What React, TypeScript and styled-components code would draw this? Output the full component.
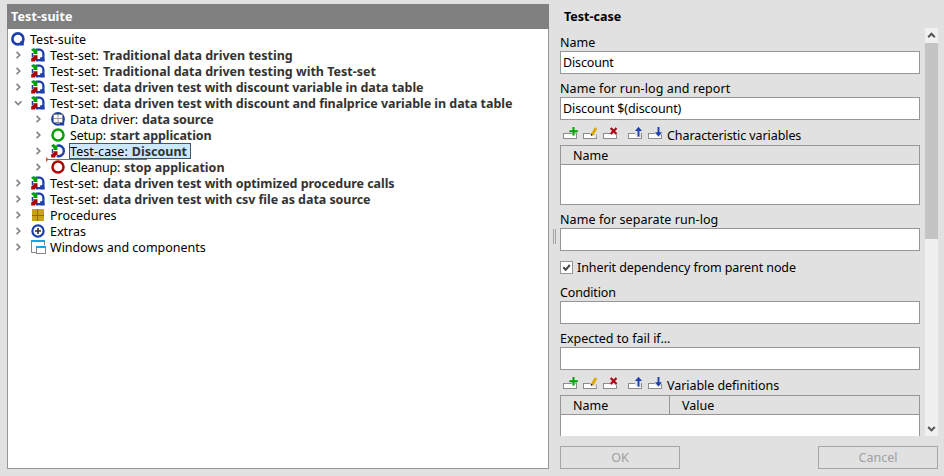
import React from 'react';
import styled, { createGlobalStyle } from 'styled-components';

const Global = createGlobalStyle`
  *, *::after { box-sizing: border-box; }
  body { margin: 0; background: #e1e1e1; }
`;

const Page = styled.div`
  display: flex;
  width: 944px;
  height: 476px;
  padding: 4px 6px 7px 7px;
  background: #e1e1e1;
  color: #000;
  font: 12.5px/16px 'Noto Sans', 'Open Sans', sans-serif;
  overflow: hidden;
  white-space: pre;
`;

const Text = styled.span<{ $track?: number }>`
  letter-spacing: ${p => p.$track ?? 0}px;
`;

/* ---------- tree ---------- */

const TreePanel = styled.section`
  display: flex;
  flex-direction: column;
  width: 542px;
  height: 465px;
`;

const TreeTitle = styled.header`
  height: 25px;
  padding: 5px 4px 0;
  background: #808080;
  color: #fff;
  font-weight: 700;
`;

const TreeBody = styled.div`
  flex: 1;
  padding: 2px 0 0 3px;
  background: #fff;
  border: solid #969696;
  border-width: 0 1px 1px;
`;

const Row = styled.div<{ $depth: number }>`
  position: relative;
  display: flex;
  align-items: center;
  height: 16px;
  padding-left: ${p => Math.max(0, p.$depth - 1) * 20}px;
`;

const Toggle = styled.svg`
  width: 15px;
  height: 16px;
  margin-right: 5px;
  fill: none;
  stroke: #858585;
  stroke-width: 1.7;
`;

const NodeIcon = styled.svg`
  width: 16px;
  height: 16px;
  flex: none;
`;

const NodeText = styled.span<{ $selected?: boolean }>`
  display: flex;
  align-items: flex-start;
  gap: 4px;
  height: 16px;
  margin-left: 2px;
  padding: 0 3px 0 0;
  border: 1px solid ${p => (p.$selected ? '#43556b' : 'transparent')};
  background: ${p => (p.$selected ? '#cce8ff' : 'transparent')};
`;

const NodeName = styled(Text)`
  font-weight: 700;
  color: #333;
`;

const DropMarker = styled.svg`
  position: absolute;
  left: 35px;
  top: 14px;
  width: 102px;
  height: 5px;
`;

const BLUE = '#1c3fae';
const GREEN = '#00a000';
const RED = '#ae0000';

type IconKind = 'suite' | 'set' | 'driver' | 'setup' | 'case' | 'cleanup' | 'procs' | 'extras' | 'windows';

function Icon({ kind }: { kind: IconKind }) {
  return (
    <NodeIcon viewBox="0 0 16 16">
      {kind === 'suite' && (
        <g fill="none" stroke={BLUE}>
          <circle cx="6.9" cy="7.9" r="5.5" strokeWidth="2.6" />
          <path d="M9 10.4h3.8v4.1h-3.6z" fill={BLUE} stroke="none" />
        </g>
      )}
      {kind === 'set' && (
        <g>
          <path d="M4.5 2.6H8.5A4.3 4.3 0 0 1 12.4 7v3.5a3.4 3.4 0 0 1-3.4 2.6H6" fill="none" stroke={BLUE} strokeWidth="2.3" />
          <path d="M9 10.2h3.4l1.3 1.6v2.6H9.6z" fill={BLUE} />
          <path d="M4.6 12h2.6v2.4H4.6z" fill={BLUE} />
          <path d="M1.4 6v4" stroke={BLUE} strokeWidth="1.4" />
          <path d="M0 2.4 2.8 1 5 2.7 6.4 2.3V7H2l.8-1.6z" fill={GREEN} />
          <path d="M2 8.3h4.5v4.3L5 11.9l-1 2.6H.2v-3.3l2.5-1.5z" fill={RED} />
        </g>
      )}
      {kind === 'case' && (
        <g>
          <path d="M5.8 2.9A5.3 5.3 0 1 1 5.8 12.9" fill="none" stroke={BLUE} strokeWidth="2.4" />
          <path d="M1.4 6v4" stroke={BLUE} strokeWidth="1.2" />
          <path d="M0 2.4 2.8 1 5 2.7 6.4 2.3V7H2l.8-1.6z" fill={GREEN} />
          <path d="M2 8.3h4.5v4.3L5 11.9l-1 2.6H.2v-3.3l2.5-1.5z" fill={RED} />
        </g>
      )}
      {kind === 'driver' && (
        <g>
          <circle cx="7" cy="7.9" r="5.8" fill="#fff" stroke={BLUE} strokeWidth="2.2" />
          <path d="M9 11h4.2v3.5H9.5z" fill={BLUE} />
          <rect x="2.5" y="3.5" width="9" height="8" rx="1" fill="#fff" stroke="#858585" />
          <path d="M3 7.5h8M7 3.5v8" stroke="#a0a0a0" fill="none" />
        </g>
      )}
      {kind === 'setup' && <circle cx="7" cy="8" r="5.5" fill="none" stroke={GREEN} strokeWidth="2.5" />}
      {kind === 'cleanup' && <circle cx="7" cy="8" r="5.5" fill="none" stroke={RED} strokeWidth="2.5" />}
      {kind === 'procs' && (
        <g>
          <rect x="1" y="2" width="12" height="12" fill="#c9a11c" />
          <path d="M6.5 2v12M1 8.5h12" stroke="#8d6c00" />
        </g>
      )}
      {kind === 'extras' && (
        <g fill="none">
          <circle cx="7" cy="8" r="5.6" stroke={BLUE} strokeWidth="2.2" />
          <path d="M4 8h6M7 5v6" stroke="#303030" strokeWidth="1.6" />
        </g>
      )}
      {kind === 'windows' && (
        <g>
          <path d="M.5 3v10.5h5M13.5 3v3" fill="none" stroke="#858585" />
          <path d="M0 2h14" stroke="#10a6e6" strokeWidth="2" />
          <rect x="5.5" y="7.5" width="9" height="7" fill="#fff" stroke="#858585" />
          <path d="M5 8h10" stroke="#10a6e6" strokeWidth="2" />
        </g>
      )}
    </NodeIcon>
  );
}

interface TreeNode {
  icon: IconKind;
  label: string;
  name?: string;
  depth?: number;
  open?: boolean;
  selected?: boolean;
  t1?: number;
  t2?: number;
}

const NODES: TreeNode[] = [
  { icon: 'suite', label: 'Test-suite', depth: 0 },
  { icon: 'set', label: 'Test-set:', name: 'Traditional data driven testing', t1: 0.05 },
  { icon: 'set', label: 'Test-set:', name: 'Traditional data driven testing with Test-set', t1: 0.05 },
  { icon: 'set', label: 'Test-set:', name: 'data driven test with discount variable in data table', t1: 0.05, t2: -0.055 },
  { icon: 'set', label: 'Test-set:', name: 'data driven test with discount and finalprice variable in data table', open: true, t1: 0.05, t2: -0.045 },
  { icon: 'driver', label: 'Data driver:', name: 'data source', depth: 2, t1: -0.07, t2: -0.13 },
  { icon: 'setup', label: 'Setup:', name: 'start application', depth: 2, t1: -0.2, t2: -0.1 },
  { icon: 'case', label: 'Test-case:', name: 'Discount', depth: 2, selected: true, t1: 0.08 },
  { icon: 'cleanup', label: 'Cleanup:', name: 'stop application', depth: 2, t1: -0.2 },
  { icon: 'set', label: 'Test-set:', name: 'data driven test with optimized procedure calls', t1: 0.05, t2: -0.055 },
  { icon: 'set', label: 'Test-set:', name: 'data driven test with csv file as data source', t1: 0.05, t2: -0.055 },
  { icon: 'procs', label: 'Procedures' },
  { icon: 'extras', label: 'Extras' },
  { icon: 'windows', label: 'Windows and components' },
];

function TreeRow({ node }: { node: TreeNode }) {
  const depth = node.depth ?? 1;
  return (
    <Row $depth={depth}>
      {depth > 0 && (
        <Toggle viewBox="0 0 15 16">
          <path d={node.open ? 'M4 6.3 7.2 9.5 10.4 6.3' : 'M5.6 4.8 8.8 8 5.6 11.2'} />
        </Toggle>
      )}
      <Icon kind={node.icon} />
      <NodeText $selected={node.selected}>
        <Text $track={node.t1}>{node.label}</Text>
        {node.name && <NodeName $track={node.t2}>{node.name}</NodeName>}
      </NodeText>
      {node.selected && (
        <DropMarker viewBox="0 0 102 5">
          <path d="M0 0v5l2.5-2.5z" fill="#d4501e" />
          <path d="M0 2.5h101" stroke="#d4501e" />
        </DropMarker>
      )}
    </Row>
  );
}

/* ---------- details ---------- */

const Splitter = styled.div`
  display: flex;
  justify-content: center;
  align-items: center;
  width: 11px;
  &::after {
    content: '';
    width: 3px;
    height: 15px;
    border: solid #a3a3a3;
    border-width: 0 1px;
  }
`;

const Details = styled.section`
  display: flex;
  flex-direction: column;
  width: 378px;
`;

const DetailsTitle = styled.h1`
  height: 24px;
  margin: 0;
  padding: 5px 4px 0;
  font-size: 12.5px;
  line-height: 16px;
  font-weight: 700;
`;

const ScrollArea = styled.div`
  display: flex;
  justify-content: space-between;
  height: 408px;
  overflow: hidden;
`;

const Form = styled.form`
  width: 360px;
`;

const Label = styled.div`
  height: 16px;
  margin: 6px 0 1px;
  padding-top: 1px;
`;

const Input = styled.div`
  height: 23px;
  padding: 0 2px;
  line-height: 22px;
  background: #fff;
  border: 1px solid #969696;
`;

const CheckRow = styled.div`
  display: flex;
  align-items: flex-start;
  gap: 4px;
  height: 16px;
  margin: 8px 0 9px;
  padding-top: 1px;
`;

const CheckBox = styled.svg`
  width: 13px;
  height: 13px;
  margin-top: 1px;
  background: #fff;
  border: 1px solid #969696;
`;

const TableTools = styled.div`
  display: flex;
  height: 25px;
  padding: 6px 0 0 3px;
`;

const ToolIcon = styled.svg<{ $gap?: number }>`
  width: 16px;
  height: 14px;
  margin-right: ${p => p.$gap ?? 4}px;
  flex: none;
`;

const ToolLabel = styled(Text)`
  padding-top: 2px;
`;

const Table = styled.div`
  height: 60px;
  background: #fff;
  border: 1px solid #969696;
`;

const TableHead = styled.div`
  display: flex;
  height: 19px;
  background: #e1e1e1;
  border-bottom: 1px solid #969696;
`;

const HeadCell = styled.div<{ $divided?: boolean }>`
  width: ${p => (p.$divided ? '109px' : 'auto')};
  padding: 2px 12px 0;
  border-right: ${p => (p.$divided ? '1px solid #969696' : '0')};
`;

const ScrollBar = styled.div`
  display: flex;
  flex-direction: column;
  width: 13px;
  height: 408px;
  background: #f0f0f0;
`;

const ScrollArrow = styled.svg`
  width: 13px;
  height: 15px;
  flex: none;
  fill: none;
  stroke: #555;
  stroke-width: 2;
`;

const Thumb = styled.div`
  height: 196px;
  margin-bottom: auto;
  background: #c4c4c4;
`;

const Actions = styled.footer`
  display: flex;
  justify-content: space-between;
  padding-top: 10px;
`;

const Button = styled.div`
  width: 120px;
  height: 23px;
  border: 1px solid #a6a6a6;
  color: #a0a0a0;
  line-height: 22px;
  text-align: center;
`;

function Tool({ kind, gap }: { kind: 'add' | 'edit' | 'del' | 'up' | 'down'; gap?: number }) {
  return (
    <ToolIcon viewBox="0 0 16 14" $gap={gap}>
      <rect x=".5" y="7.5" width="13" height="5" fill="#fff" stroke="#8c8c8c" />
      {kind === 'add' && (
        <g fill="none">
          <path d="M10.5 .5v9M6.2 5.2h8.8" stroke="#e1e1e1" strokeWidth="3.6" />
          <path d="M10.5 1v8.4M6.4 5.2h8.4" stroke={GREEN} strokeWidth="1.9" />
        </g>
      )}
      {kind === 'edit' && (
        <g>
          <path d="M7 7h6.9v1.3h-.5V11l-3-.5L7 9z" fill="#e1e1e1" />
          <path d="M9.3 8.4 13 2" stroke="#dca900" strokeWidth="2.9" fill="none" />
          <path d="M7.8 7.6 9.9 8.8 8 10z" fill="#222" />
        </g>
      )}
      {kind === 'del' && (
        <g fill="none">
          <path d="M7 6h7.5v2.6H7z" fill="#e1e1e1" />
          <path d="M7.7 2 13.5 8M13.5 2 7.7 8" stroke="#b00010" strokeWidth="2.1" />
        </g>
      )}
      {kind === 'up' && (
        <g>
          <path d="M7 6h6v5H8.5V9H7z" fill="#e1e1e1" />
          <path d="M13.5 7v5" stroke="#8c8c8c" />
          <path d="M10.5 10.6V3" stroke={BLUE} strokeWidth="1.9" />
          <path d="M10.5 .8 14 5H7z" fill={BLUE} />
        </g>
      )}
      {kind === 'down' && (
        <g>
          <path d="M7 6h7v2.6l-2.5 2.2h-2L7 8.6z" fill="#e1e1e1" />
          <path d="M13.5 8v4.5" stroke="#8c8c8c" />
          <path d="M10.5 1v7" stroke={BLUE} strokeWidth="1.9" />
          <path d="M10.5 10.4 14 6.2H7z" fill={BLUE} />
        </g>
      )}
    </ToolIcon>
  );
}

function Tools({ label, track }: { label: string; track?: number }) {
  return (
    <TableTools>
      <Tool kind="add" />
      <Tool kind="edit" />
      <Tool kind="del" gap={9} />
      <Tool kind="up" />
      <Tool kind="down" gap={3} />
      <ToolLabel $track={track}>{label}</ToolLabel>
    </TableTools>
  );
}

function Field({ label, value, t1, t2 }: { label: string; value?: string; t1?: number; t2?: number }) {
  return (
    <>
      <Label><Text $track={t1}>{label}</Text></Label>
      <Input><Text $track={t2}>{value}</Text></Input>
    </>
  );
}

export default function App() {
  return (
    <Page>
      <Global />
      <TreePanel>
        <TreeTitle><Text $track={0.1}>Test-suite</Text></TreeTitle>
        <TreeBody>
          {NODES.map((n, i) => <TreeRow key={i} node={n} />)}
        </TreeBody>
      </TreePanel>
      <Splitter />
      <Details>
        <DetailsTitle>Test-case</DetailsTitle>
        <ScrollArea>
          <Form>
            <Field label="Name" value="Discount" t2={-0.15} />
            <Field label="Name for run-log and report" value="Discount $(discount)" t1={0.1} t2={-0.1} />
            <Tools label="Characteristic variables" track={-0.08} />
            <Table>
              <TableHead><HeadCell>Name</HeadCell></TableHead>
            </Table>
            <Field label="Name for separate run-log" t1={0.08} />
            <CheckRow>
              <CheckBox viewBox="0 0 11 11">
                <path d="M2.3 5.2 4.7 7.8 8.8 3" fill="none" stroke="#444" strokeWidth="2" />
              </CheckBox>
              <Text $track={-0.09}>Inherit dependency from parent node</Text>
            </CheckRow>
            <Field label="Condition" t1={-0.15} />
            <Field label="Expected to fail if..." />
            <Tools label="Variable definitions" track={-0.05} />
            <Table>
              <TableHead>
                <HeadCell $divided>Name</HeadCell>
                <HeadCell>Value</HeadCell>
              </TableHead>
            </Table>
          </Form>
          <ScrollBar>
            <ScrollArrow viewBox="0 0 13 15"><path d="M3.2 9.2 6.5 5.8 9.8 9.2" /></ScrollArrow>
            <Thumb />
            <ScrollArrow viewBox="0 0 13 15"><path d="M3.2 6 6.5 9.4 9.8 6" /></ScrollArrow>
          </ScrollBar>
        </ScrollArea>
        <Actions>
          <Button>OK</Button>
          <Button>Cancel</Button>
        </Actions>
      </Details>
    </Page>
  );
}
